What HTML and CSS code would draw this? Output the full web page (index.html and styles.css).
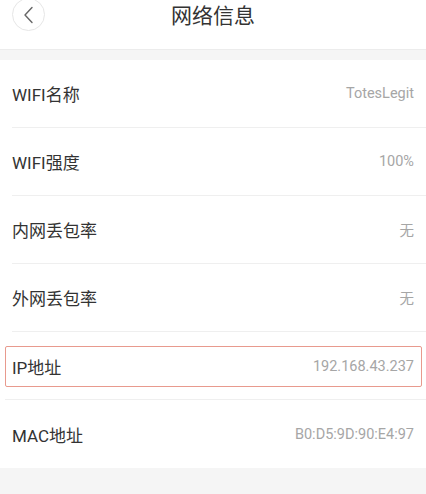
FILE: index.html
```html
<!DOCTYPE html>
<html lang="zh">
<head>
<meta charset="utf-8">
<title>网络信息</title>
<link rel="stylesheet" href="styles.css">
</head>
<body>
<header class="nav">
  <button class="back" aria-label="返回">
    <svg width="14" height="18" viewBox="0 0 14 18"><path d="M10 1.5 L3 9 L10 16.5" fill="none" stroke="#666" stroke-width="1.4" stroke-linecap="round" stroke-linejoin="round"/></svg>
  </button>
  <h1 class="title">网络信息</h1>
</header>
<main class="list">
  <div class="row"><span class="label">WIFI名称</span><span class="value">TotesLegit</span></div>
  <div class="row"><span class="label">WIFI强度</span><span class="value">100%</span></div>
  <div class="row"><span class="label">内网丢包率</span><span class="value">无</span></div>
  <div class="row"><span class="label">外网丢包率</span><span class="value">无</span></div>
  <div class="row row-hl"><div class="hl"><span class="label">IP地址</span><span class="value">192.168.43.237</span></div></div>
  <div class="row last"><span class="label">MAC地址</span><span class="value">B0:D5:9D:90:E4:97</span></div>
</main>
</body>
</html>
```
FILE: styles.css
```css
html, body {
  margin: 0;
  padding: 0;
}
body {
  background: #f5f5f5;
  font-family: Roboto, "Noto Sans CJK SC", sans-serif;
  width: 426px;
  height: 494px;
  overflow: hidden;
}
.nav {
  position: relative;
  height: 49px;
  background: #fff;
  border-bottom: 1px solid #ececec;
  display: flex;
  align-items: flex-start;
  justify-content: center;
  margin-bottom: 10px;
}
.back {
  position: absolute;
  left: 12px;
  top: -2px;
  width: 33px;
  height: 33px;
  border-radius: 50%;
  border: 1px solid #e6e6e6;
  background: #fff;
  padding: 0;
  display: flex;
  align-items: center;
  justify-content: center;
  box-sizing: border-box;
}
.title {
  margin: 0;
  margin-top: 1px;
  font-size: 21px;
  font-weight: 400;
  color: #333;
  line-height: 30px;
}
.list {
  background: #fff;
  padding-left: 12px;
}
.row {
  height: 68px;
  display: flex;
  align-items: center;
  justify-content: space-between;
  border-bottom: 1px solid #efefef;
  box-sizing: border-box;
  padding-right: 12px;
}
.row.last {
  border-bottom: none;
}
.row-hl {
  margin-left: -7px;
  padding-right: 4px;
  padding-top: 2px;
}
.hl {
  flex: 1;
  height: 41px;
  border: 1px solid #e89a8e;
  border-radius: 2px;
  box-sizing: border-box;
  display: flex;
  align-items: center;
  justify-content: space-between;
  padding: 0 7px 0 6px;
}
.label {
  font-size: 17px;
  color: #333;
}
.value {
  font-size: 14.5px;
  color: #a6a6a6;
}
```
